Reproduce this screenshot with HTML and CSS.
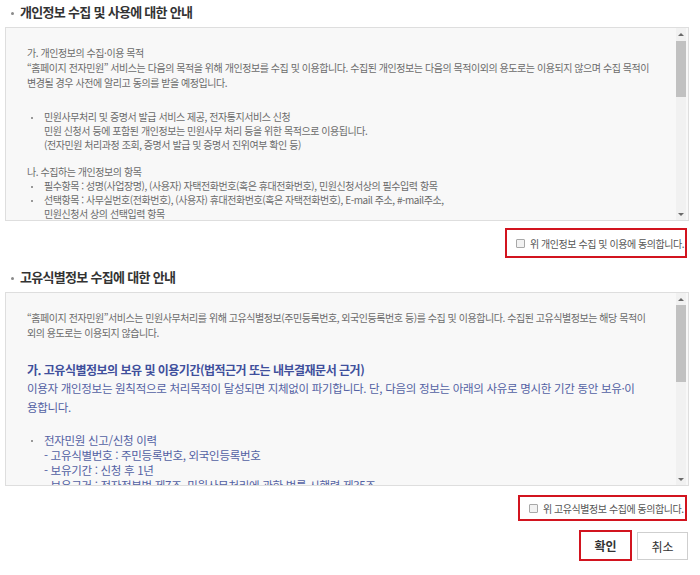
FILE: index.html
```html
<!DOCTYPE html>
<html lang="ko">
<head>
    <meta charset="UTF-8">
    <meta name="viewport" content="width=device-width, initial-scale=1.0">
    <title>개인정보 수집 동의</title>
    <link rel="stylesheet" href="styles.css">
</head>
<body>
    <div class="wrap">
        <!-- 개인정보 안내 -->
        <h3 class="sec-title">개인정보 수집 및 사용에 대한 안내</h3>
        <div class="terms-box">
            <div class="terms-text">
                <p class="p-first">가. 개인정보의 수집·이용 목적<br>
                “홈페이지 전자민원” 서비스는 다음의 목적을 위해 개인정보를 수집 및 이용합니다. 수집된 개인정보는 다음의 목적이외의 용도로는 이용되지 않으며 수집 목적이<br>
                변경될 경우 사전에 알리고 동의를 받을 예정입니다.</p>
                <ul class="dot-list list-a">
                    <li>민원사무처리 및 증명서 발급 서비스 제공, 전자통지서비스 신청<br>
                    민원 신청서 등에 포함된 개인정보는 민원사무 처리 등을 위한 목적으로 이용됩니다.<br>
                    (전자민원 처리과정 조회, 증명서 발급 및 증명서 진위여부 확인 등)</li>
                </ul>
                <p class="p-tight">나. 수집하는 개인정보의 항목</p>
                <ul class="dot-list list-b">
                    <li>필수항목 : 성명(사업장명), (사용자) 자택전화번호(혹은 휴대전화번호), 민원신청서상의 필수입력 항목</li>
                    <li>선택항목 : 사무실번호(전화번호), (사용자) 휴대전화번호(혹은 자택전화번호), E-mail 주소, #-mail주소,<br>
                    민원신청서 상의 선택입력 항목</li>
                </ul>
            </div>
            <div class="scrollbar">
                <span class="arrow up"></span>
                <span class="track"><span class="thumb thumb-a"></span></span>
                <span class="arrow down"></span>
            </div>
        </div>
        <div class="agree-row">
            <label class="agree hl agree-a"><span class="chk"></span>위 개인정보 수집 및 이용에 동의합니다.</label>
        </div>

        <!-- 고유식별정보 안내 -->
        <h3 class="sec-title sec-two">고유식별정보 수집에 대한 안내</h3>
        <div class="terms-box">
            <div class="terms-text">
                <p class="p-first">“홈페이지 전자민원”서비스는 민원사무처리를 위해 고유식별정보(주민등록번호, 외국인등록번호 등)를 수집 및 이용합니다. 수집된 고유식별정보는 해당 목적이<br>
                외의 용도로는 이용되지 않습니다.</p>
                <h4 class="blue-title">가. 고유식별정보의 보유 및 이용기간(법적근거 또는 내부결재문서 근거)</h4>
                <p class="blue-text">이용자 개인정보는 원칙적으로 처리목적이 달성되면 지체없이 파기합니다. 단, 다음의 정보는 아래의 사유로 명시한 기간 동안 보유·이<br>
                용합니다.</p>
                <ul class="dot-list blue-list">
                    <li>전자민원 신고/신청 이력<br>
                    - 고유식별번호 : 주민등록번호, 외국인등록번호<br>
                    - 보유기간 : 신청 후 1년<br>
                    - 보유근거 : 전자정부법 제7조, 민원사무처리에 관한 법률 시행령 제35조</li>
                </ul>
            </div>
            <div class="scrollbar">
                <span class="arrow up"></span>
                <span class="track"><span class="thumb thumb-b"></span></span>
                <span class="arrow down"></span>
            </div>
        </div>
        <div class="agree-row agree-row-b">
            <label class="agree hl agree-b"><span class="chk"></span>위 고유식별정보 수집에 동의합니다.</label>
        </div>

        <!-- 버튼 -->
        <div class="btn-row">
            <button class="btn hl btn-ok">확인</button>
            <button class="btn btn-cancel">취소</button>
        </div>
    </div>
</body>
</html>
```

FILE: styles.css
```css
/* 기본 */
body {
    margin: 0;
    background: #fff;
    color: #333;
    font-family: "Noto Sans CJK KR", "Noto Sans", sans-serif;
}
.wrap {
    padding: 0 11px 0 5px;
}

/* 섹션 제목 */
.sec-title {
    margin: 2px 0 0 0;
    padding-left: 15px;
    position: relative;
    font-size: 13px;
    line-height: 20px;
    letter-spacing: -0.7px;
    font-weight: bold;
    color: #333;
}
.sec-title:before {
    content: "";
    position: absolute;
    left: 6px;
    top: 10px;
    width: 3px;
    height: 3px;
    border-radius: 50%;
    background: #8a8a8a;
}
.sec-two {
    margin-top: 9px;
}

/* 약관 박스 */
.terms-box {
    margin-top: 5px;
    height: 194px;
    box-sizing: border-box;
    border: 1px solid #dedede;
    background: #f8f8f8;
    display: flex;
    overflow: hidden;
}
.terms-text {
    flex: 1;
    overflow: hidden;
    padding: 17px 10px 0 21px;
    font-size: 10px;
    letter-spacing: -0.45px;
    line-height: 15px;
    color: #6b6b6b;
    white-space: nowrap;
}
.terms-text p {
    margin: 0;
}
.terms-text p.p-first {
    margin-bottom: 20px;
}
.terms-text p.p-tight {
    line-height: 14px;
}
.dot-list {
    list-style: none;
    margin: 0;
    padding: 0;
}
.dot-list li {
    position: relative;
    padding-left: 17px;
}
.dot-list li:before {
    content: "";
    position: absolute;
    left: 4px;
    top: 7px;
    width: 2px;
    height: 2px;
    background: #999;
}
.list-a,
.list-b {
    line-height: 14px;
}
.list-a {
    margin-bottom: 13px;
}

/* 파란 글씨 */
.blue-title {
    margin: 0;
    font-size: 12px;
    letter-spacing: -0.5px;
    line-height: 19px;
    font-weight: bold;
    color: #3f4f9c;
}
.blue-text {
    font-size: 11.5px;
    letter-spacing: -0.3px;
    line-height: 19px;
    color: #5361a3;
    margin-bottom: 16px !important;
}
.blue-list {
    font-size: 11.5px;
    letter-spacing: -0.3px;
    line-height: 15px;
    color: #5361a3;
}

/* 스크롤바 */
.scrollbar {
    width: 10px;
    margin-right: 2px;
    background: #f1f1f1;
    display: flex;
    flex-direction: column;
}
.arrow {
    height: 12px;
    display: flex;
    align-items: center;
    justify-content: center;
}
.arrow:after {
    content: "";
    border-left: 3px solid transparent;
    border-right: 3px solid transparent;
}
.arrow.up:after {
    border-bottom: 3px solid #6a6a6a;
}
.arrow.down:after {
    border-top: 3px solid #6a6a6a;
}
.track {
    flex: 1;
}
.thumb {
    display: block;
    background: #c1c1c1;
}
.thumb-a {
    height: 56px;
    margin-top: 1px;
}
.thumb-b {
    height: 77px;
}

/* 동의 체크 */
.agree-row {
    display: flex;
    justify-content: flex-end;
    margin-top: 7px;
    padding-right: 2px;
}
.agree-row-b {
    margin-top: 9px;
}
.agree {
    display: flex;
    align-items: center;
    box-sizing: border-box;
    font-size: 10px;
    letter-spacing: -0.45px;
    color: #555;
    white-space: nowrap;
}
.agree-a {
    height: 30px;
    width: 182px;
    padding-left: 9px;
}
.agree-b {
    height: 26px;
    width: 169px;
    padding-left: 9px;
}
.chk {
    flex: none;
    width: 7px;
    height: 7px;
    border: 1px solid #a8a8a8;
    border-radius: 1px;
    background: #f2f2f2;
    margin-right: 5px;
}
.hl {
    border: 2px solid #d2141f;
}

/* 버튼 */
.btn-row {
    display: flex;
    justify-content: flex-end;
    align-items: flex-start;
    gap: 5px;
    margin-top: 9px;
    padding-right: 1px;
}
.btn {
    font-family: "Noto Sans CJK KR", "Noto Sans", sans-serif;
    font-size: 12px;
    font-weight: bold;
    color: #333;
    background: #fff;
    cursor: pointer;
    padding: 0;
    box-sizing: border-box;
}
.btn-ok {
    width: 53px;
    height: 31px;
}
.btn-cancel {
    width: 51px;
    height: 28px;
    margin-top: 2px;
    border: 1px solid #cfcfcf;
    font-weight: normal;
}
```
